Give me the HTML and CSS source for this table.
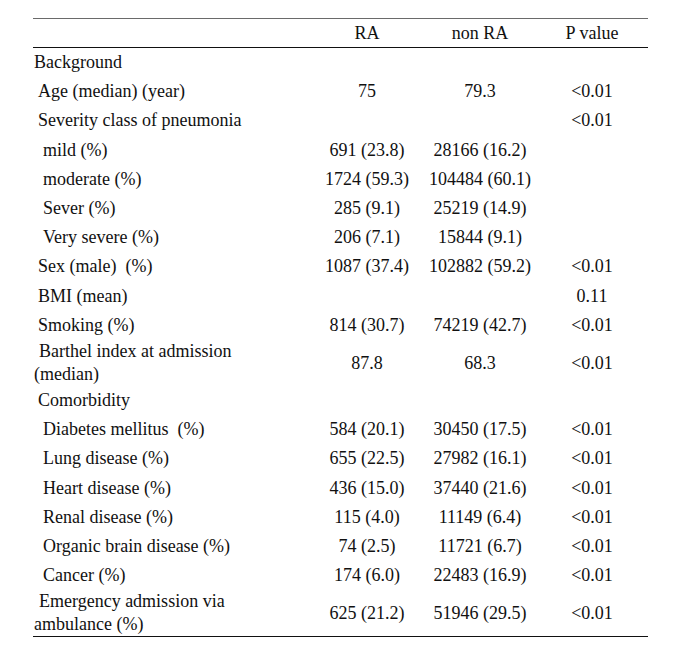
FILE: index.html
```html
<!DOCTYPE html>
<html lang="en">
<head>
<meta charset="utf-8">
<title>Table</title>
<link rel="stylesheet" href="styles.css">
</head>
<body>
<table class="tbl">
  <colgroup>
    <col class="c-label">
    <col class="c-ra">
    <col class="c-non">
    <col class="c-p">
  </colgroup>
  <thead>
    <tr class="head">
      <th></th>
      <th>RA</th>
      <th>non RA</th>
      <th>P value</th>
    </tr>
  </thead>
  <tbody>
    <tr><td class="lbl">Background</td><td></td><td></td><td></td></tr>
    <tr><td class="lbl i1">Age (median) (year)</td><td>75</td><td>79.3</td><td>&lt;0.01</td></tr>
    <tr><td class="lbl i1">Severity class of pneumonia</td><td></td><td></td><td>&lt;0.01</td></tr>
    <tr><td class="lbl i2">mild (%)</td><td>691 (23.8)</td><td>28166 (16.2)</td><td></td></tr>
    <tr><td class="lbl i2">moderate (%)</td><td>1724 (59.3)</td><td>104484 (60.1)</td><td></td></tr>
    <tr><td class="lbl i2">Sever (%)</td><td>285 (9.1)</td><td>25219 (14.9)</td><td></td></tr>
    <tr><td class="lbl i2">Very severe (%)</td><td>206 (7.1)</td><td>15844 (9.1)</td><td></td></tr>
    <tr><td class="lbl i1">Sex (male)&nbsp; (%)</td><td>1087 (37.4)</td><td>102882 (59.2)</td><td>&lt;0.01</td></tr>
    <tr><td class="lbl i1">BMI (mean)</td><td></td><td></td><td>0.11</td></tr>
    <tr><td class="lbl i1">Smoking (%)</td><td>814 (30.7)</td><td>74219 (42.7)</td><td>&lt;0.01</td></tr>
    <tr class="two"><td class="lbl hang">Barthel index at admission<br>(median)</td><td>87.8</td><td>68.3</td><td>&lt;0.01</td></tr>
    <tr><td class="lbl i1">Comorbidity</td><td></td><td></td><td></td></tr>
    <tr><td class="lbl i2">Diabetes mellitus&nbsp; (%)</td><td>584 (20.1)</td><td>30450 (17.5)</td><td>&lt;0.01</td></tr>
    <tr><td class="lbl i2">Lung disease (%)</td><td>655 (22.5)</td><td>27982 (16.1)</td><td>&lt;0.01</td></tr>
    <tr><td class="lbl i2">Heart disease (%)</td><td>436 (15.0)</td><td>37440 (21.6)</td><td>&lt;0.01</td></tr>
    <tr><td class="lbl i2">Renal disease (%)</td><td>115 (4.0)</td><td>11149 (6.4)</td><td>&lt;0.01</td></tr>
    <tr><td class="lbl i2">Organic brain disease (%)</td><td>74 (2.5)</td><td>11721 (6.7)</td><td>&lt;0.01</td></tr>
    <tr><td class="lbl i2">Cancer (%)</td><td>174 (6.0)</td><td>22483 (16.9)</td><td>&lt;0.01</td></tr>
    <tr class="two last"><td class="lbl hang">Emergency admission via<br>ambulance (%)</td><td>625 (21.2)</td><td>51946 (29.5)</td><td>&lt;0.01</td></tr>
  </tbody>
</table>
</body>
</html>
```
FILE: styles.css
```css
html, body {
  margin: 0;
  padding: 0;
  background: #ffffff;
}

body {
  padding: 18px 0 0 33px;
  font-family: "Liberation Serif", "Times New Roman", serif;
  font-size: 18px;
  color: #111111;
}

.tbl {
  border-collapse: collapse;
  table-layout: fixed;
  width: 615px;
}

.c-label { width: 277px; }
.c-ra { width: 114px; }
.c-non { width: 112px; }
.c-p { width: 112px; }

.tbl th,
.tbl td {
  padding: 0;
  text-align: center;
  vertical-align: middle;
  font-weight: normal;
  line-height: 29.2px;
  white-space: nowrap;
}

.head th {
  border-top: 1px solid #6a6a6a;
  border-bottom: 1px solid #111111;
  line-height: 28px;
}

.tbl td.lbl {
  text-align: left;
  padding-left: 1px;
}

.tbl td.i1 { padding-left: 5px; }
.tbl td.i2 { padding-left: 10px; }

.tbl td.hang {
  text-indent: 5px;
}

.two td {
  line-height: 23px;
}

.two td.lbl {
  line-height: 23px;
}

.last td {
  border-bottom: 1px solid #111111;
}
```
